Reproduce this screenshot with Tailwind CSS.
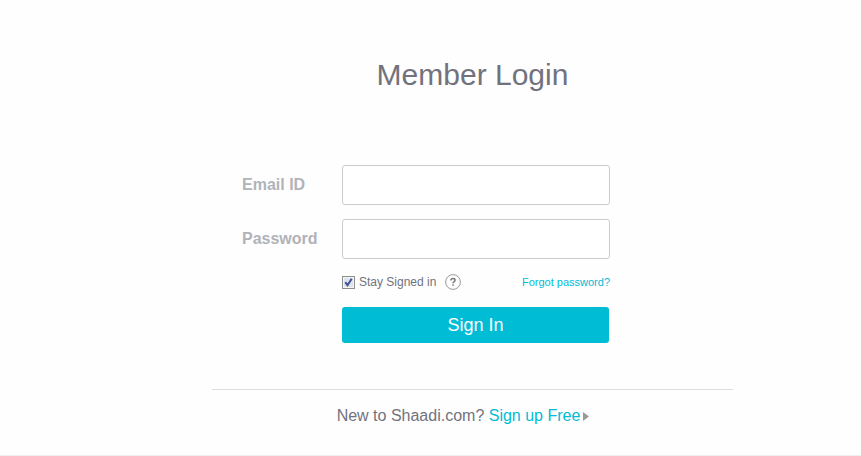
<!DOCTYPE html>
<html lang="en">
<head>
    <meta charset="UTF-8">
    <meta name="viewport" content="width=device-width, initial-scale=1.0">
    <title>Member Login</title>
    <script src="https://cdn.jsdelivr.net/npm/@tailwindcss/browser@4"></script>
</head>
<body class="bg-[#fefefe] font-['Liberation_Sans',Arial,sans-serif] text-[#72727d]">

<div class="border-b border-[#eeeeee] pl-[84px] pt-[57px] pb-[27px]">
    <main class="mx-auto max-w-[521px]">
        <h1 class="text-center text-3xl">Member Login</h1>

        <form class="mt-[72px] grid grid-cols-[100px_268px] items-center gap-y-3.5 pl-[30px]">
            <label for="email" class="font-bold text-[#b1b3b9]">Email ID</label>
            <input id="email" type="email" class="h-10 w-full rounded-[3px] border border-[#cbcbcf] bg-white px-3 outline-none">

            <label for="password" class="font-bold text-[#b1b3b9]">Password</label>
            <input id="password" type="password" class="h-10 w-full rounded-[3px] border border-[#cbcbcf] bg-white px-3 outline-none">

            <div class="col-start-2">
                <div class="flex h-[18px] items-center">
                    <span class="relative flex">
                        <input id="stay" type="checkbox" checked class="peer size-[13px] appearance-none border border-[#8e8f8f] bg-[#dfe3ea] shadow-[inset_0_0_0_1px_#f4f4f4]">
                        <svg class="pointer-events-none absolute inset-0 hidden size-[13px] peer-checked:block" viewBox="0 0 13 13" fill="none" stroke="#40519a" stroke-width="2"><path d="M3.3 6.2L5.5 9.3L9.7 2.8"/></svg>
                    </span>
                    <label for="stay" class="ml-1 text-xs">Stay Signed in</label>
                    <button type="button" aria-label="Help" class="ml-[9px] size-4">
                        <svg class="size-4" viewBox="0 0 16 16" fill="none"><circle cx="8" cy="8" r="7.4" stroke="#9a9a9f"/><path d="M5.9 6.5C5.9 5.2 6.8 4.6 8 4.6C9.2 4.6 10.1 5.2 10.1 6.3C10.1 7.6 8 7.6 8 9.2M8 10.2V11.8" stroke="#77777e" stroke-width="1.5"/></svg>
                    </button>
                    <a href="#" class="ml-auto text-[11px] text-[#00bcd5]">Forgot password?</a>
                </div>
                <button type="submit" class="mt-4 block h-9 w-[267px] rounded-[3px] bg-[#00bcd5] text-lg text-white">Sign In</button>
            </div>
        </form>

        <div class="mt-[46px] border-t border-[#dedede] pt-3.5 pr-[19px]">
            <p class="flex items-center justify-center whitespace-pre">New to Shaadi.com? <a href="#" class="flex items-center text-[#00bcd5]">Sign up Free<svg class="ml-[3px] h-[9px] w-1.5" viewBox="0 0 6 9" fill="#999"><path d="M0 0L6 4.5L0 9Z"/></svg></a></p>
        </div>
    </main>
</div>

</body>
</html>
